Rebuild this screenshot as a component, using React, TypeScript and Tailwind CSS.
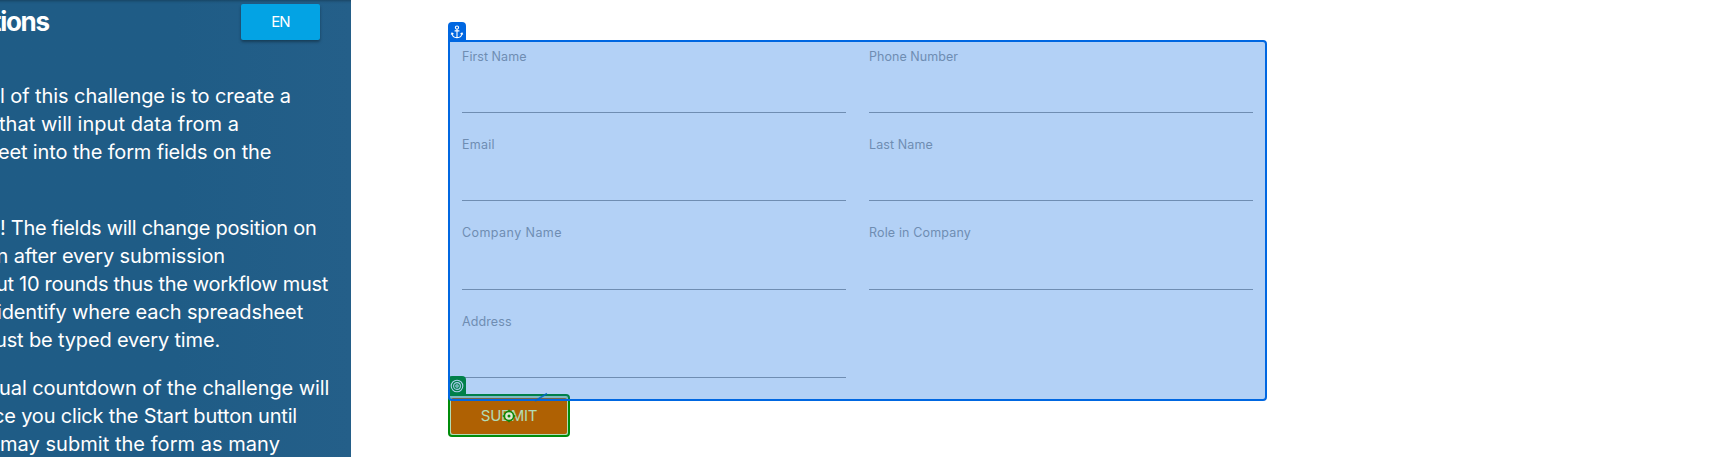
type Line = { text: string; cls: string };

const goal: Line[] = [
  { text: "l of this challenge is to create a", cls: "tracking-[-0.08px]" },
  { text: "that will input data from a", cls: "-ml-px tracking-[0.03px]" },
  { text: "eet into the form fields on the", cls: "-ml-0.5 tracking-[-0.16px]" },
];
const beware: Line[] = [
  { text: "! The fields will change position on", cls: "tracking-[-0.3px]" },
  { text: "n after every submission", cls: "-ml-[3.5px] tracking-[-0.14px]" },
  { text: "ut 10 rounds thus the workflow must", cls: "-ml-1 tracking-[-0.31px]" },
  { text: "identify where each spreadsheet", cls: "-ml-[3px] tracking-[-0.13px]" },
  { text: "ust be typed every time.", cls: "-ml-[5px] tracking-[-0.16px]" },
];
const countdown: Line[] = [
  { text: "ual countdown of the challenge will", cls: "-ml-px tracking-[-0.09px]" },
  { text: "ce you click the Start button until", cls: "-ml-[7px] tracking-[-0.18px]" },
  { text: "may submit the form as many", cls: "tracking-[0.04px]" },
];

const fields: Line[] = [
  { text: "First Name", cls: "tracking-[0.05px]" },
  { text: "Phone Number", cls: "tracking-[0.05px]" },
  { text: "Email", cls: "tracking-[0.25px]" },
  { text: "Last Name", cls: "tracking-[0.1px]" },
  { text: "Company Name", cls: "tracking-[0.43px]" },
  { text: "Role in Company", cls: "tracking-[0.15px]" },
  { text: "Address", cls: "tracking-[0.1px]" },
];

function Paragraph({ lines, className }: { lines: Line[]; className: string }) {
  return (
    <p className={className}>
      {lines.map((l) => (
        <span key={l.text} className={`block whitespace-nowrap ${l.cls}`}>
          {l.text}
        </span>
      ))}
    </p>
  );
}

function AnchorIcon() {
  return (
    <svg viewBox="0 0 14 14" className="h-3.5 w-3.5" fill="none" stroke="white" strokeWidth="1.1">
      <circle cx="7" cy="2.6" r="1.6" />
      <path d="M7 4.2V12.6M4.6 5.9H9.4M2 8.2C2.2 11 4.4 12.6 7 12.6S11.8 11 12 8.2M1.2 9.6L2 8.1L3.5 9M12.8 9.6L12 8.1L10.5 9" />
    </svg>
  );
}

function TargetIcon() {
  return (
    <svg viewBox="0 0 14 14" className="h-3.5 w-3.5" fill="none" stroke="#f4fbf4" strokeWidth="1.1">
      <circle cx="7" cy="7" r="5.8" />
      <circle cx="7" cy="7" r="3.4" />
      <circle cx="7" cy="7" r="1.2" />
    </svg>
  );
}

export default function App() {
  return (
    <div className="flex h-[457px] w-full overflow-hidden bg-white font-['Inter',sans-serif]">
      <aside className="h-full w-[351px] shrink-0 overflow-hidden bg-linear-to-r from-[#1f5c86] via-[#1f5c86] to-[#245f89] text-white shadow-[inset_0_5px_3px_-4px_rgba(0,0,0,0.3)]">
        <header className="flex h-[82px] items-start justify-between pr-[31px]">
          <h1 className="-ml-2 mt-[5px] text-[26px] leading-[34px] font-bold tracking-[-1.3px]">tions</h1>
          <button className="mt-1 h-9 w-[79px] rounded-xs bg-[#03a3e4] text-[15px] leading-9 tracking-[-0.8px] shadow-[0_2px_3px_rgba(0,0,0,0.35)]">
            EN
          </button>
        </header>
        <div className="text-[20px] leading-7">
          <Paragraph lines={goal} className="" />
          <Paragraph lines={beware} className="mt-12" />
          <Paragraph lines={countdown} className="mt-5" />
        </div>
      </aside>

      <main className="pt-10 pl-[97px]">
        <div className="relative w-[819px]">
          <form className="grid h-[358px] auto-rows-[88.4px] grid-cols-[384px_384px] content-start gap-x-[23px] pt-[7px] pl-3.5">
            {fields.map((f) => (
              <label
                key={f.text}
                className={`block h-[66px] border-b border-[#9e9e9e] pt-[0.6px] text-[12.5px] leading-[18px] text-[#9e9e9e] ${f.cls}`}
              >
                {f.text}
              </label>
            ))}
          </form>
          <button
            type="button"
            className="ml-[3px] block h-9 w-[116px] rounded-xs bg-[#fb4f00] text-[15px] leading-9 tracking-[-0.25px] text-white"
          >
            SUBMIT
          </button>

          {/* Target selection around the submit button */}
          <div className="absolute top-[354px] left-0 h-[43px] w-[122px] rounded-[4px] rounded-tl-none border-2 border-[#008c0a] bg-[#008c0a]/30" />
          <div className="absolute top-[336px] left-0 flex h-[19px] w-[18px] items-center justify-center rounded-t-[4px] bg-[#008c0a]">
            <TargetIcon />
          </div>
          <svg viewBox="0 0 14 14" className="absolute top-[369px] left-[54px] h-3.5 w-3.5" fill="none">
            <circle cx="7" cy="7" r="4.6" fill="#e3e8d2" stroke="#0a8a0a" strokeWidth="1.6" />
            <circle cx="7" cy="7" r="1.5" fill="#0a8a0a" />
            <path d="M7 .7V2.8M7 11.2V13.3M.7 7H2.8M11.2 7H13.3" stroke="#0a8a0a" strokeWidth="1.4" />
          </svg>

          {/* Anchor selection around the form */}
          <div className="absolute top-0 left-0 h-[361px] w-[819px] rounded-[4px] rounded-tl-none border-2 border-[#0067e1] bg-[#0268e2]/30" />
          <div className="absolute -top-[18px] left-0 flex h-[19px] w-[18px] items-center justify-center rounded-t-[4px] bg-[#0067e1]">
            <AnchorIcon />
          </div>
          <svg viewBox="0 0 16 10" className="absolute top-[352px] left-[86px] h-2.5 w-4" fill="none">
            <path d="M1 9L13 1.5" stroke="#0067c8" strokeOpacity=".85" strokeWidth="1.6" />
          </svg>
        </div>
      </main>
    </div>
  );
}
